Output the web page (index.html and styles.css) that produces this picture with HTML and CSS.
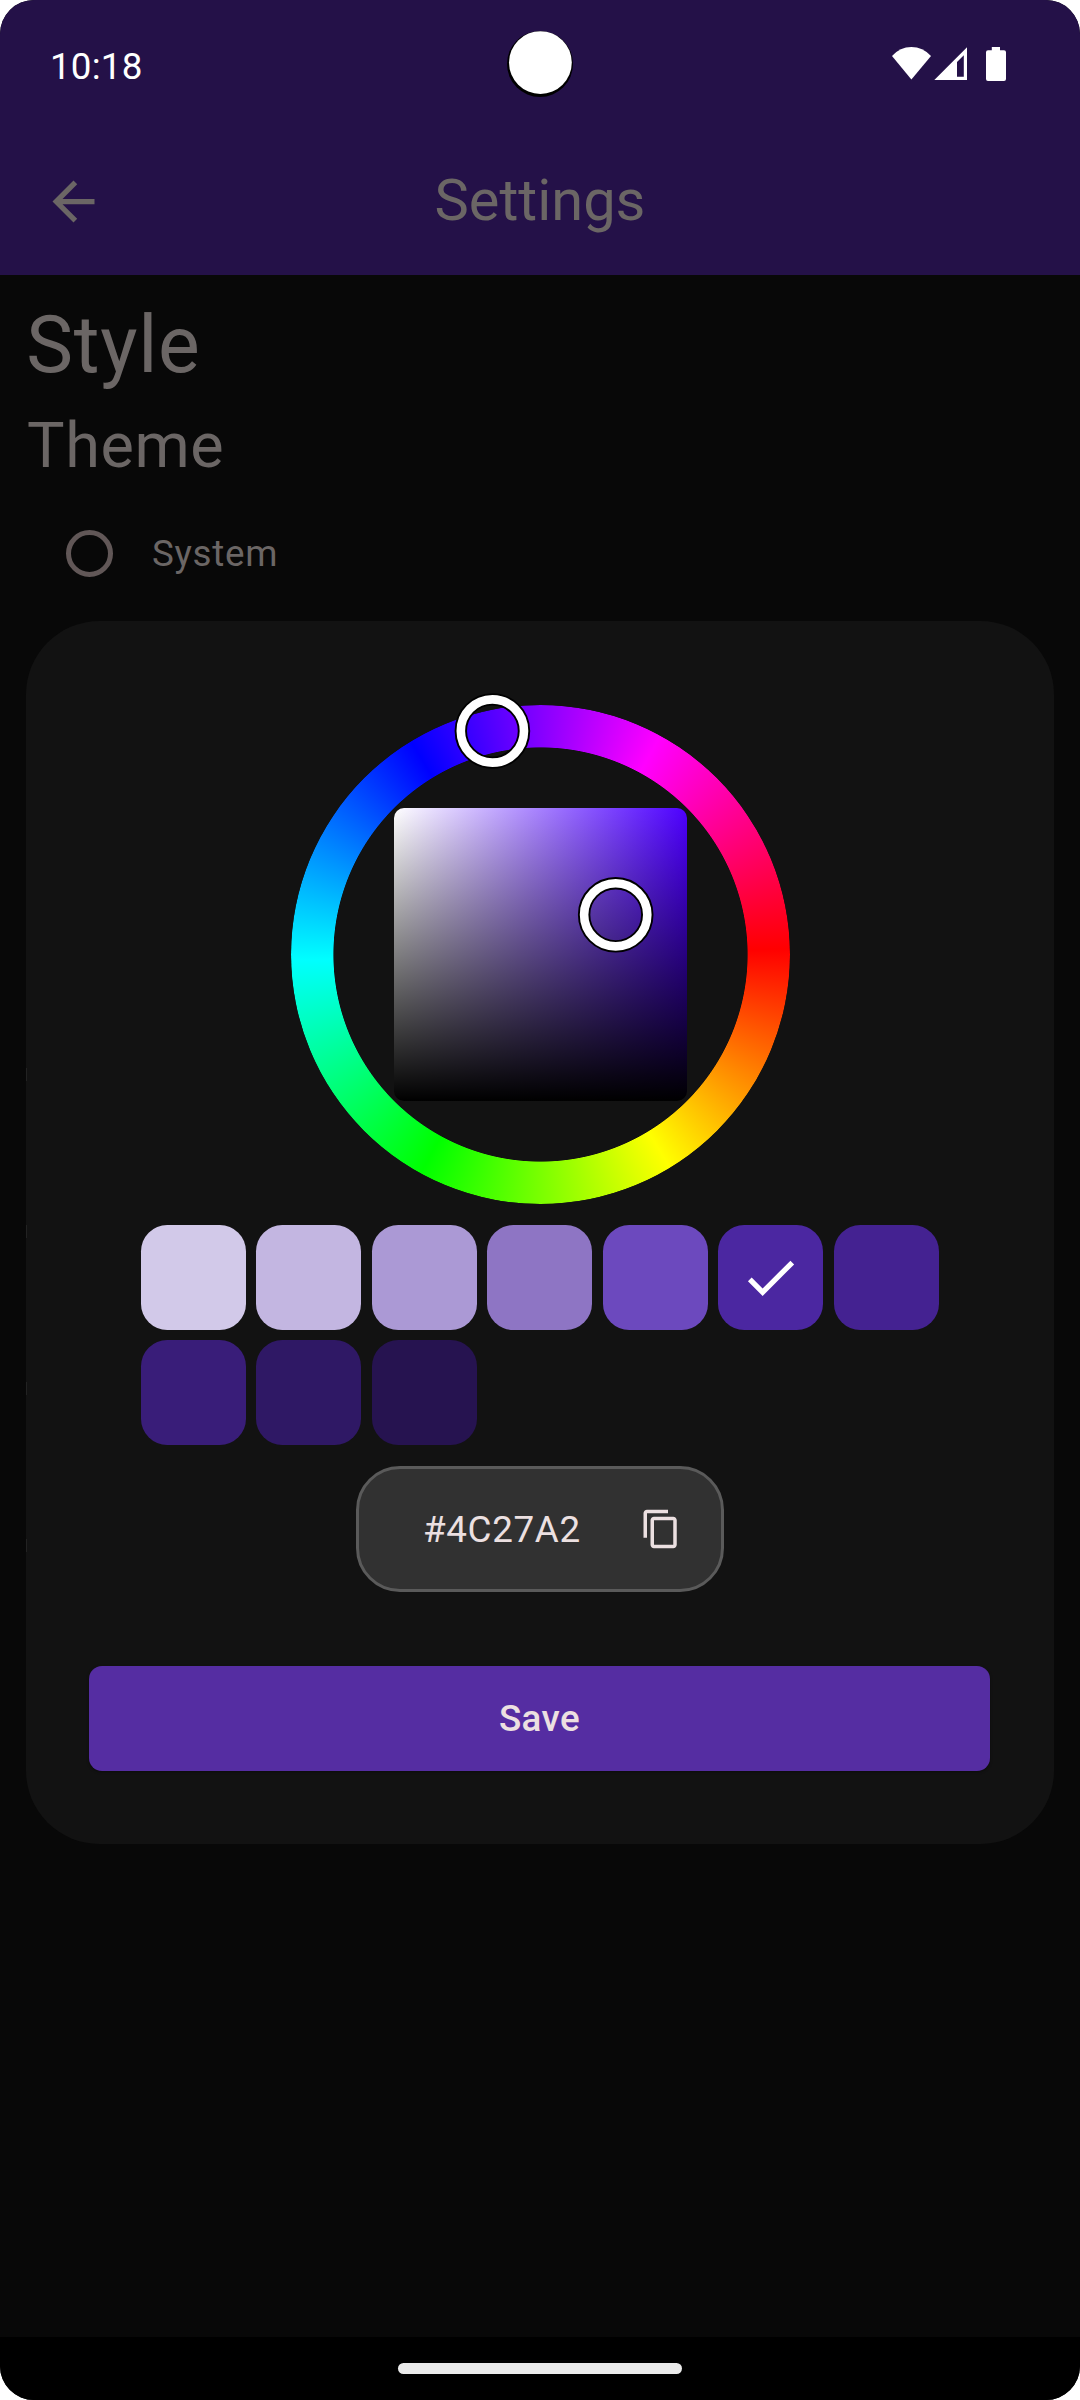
FILE: index.html
```html
<!DOCTYPE html>
<html lang="en">
<head>
<meta charset="utf-8">
<title>Settings</title>
<link rel="stylesheet" href="styles.css">
</head>
<body>
<div class="screen">
  <div class="status-bar">
    <span class="clock">10:18</span>
    <svg class="camera" width="68" height="68" viewBox="0 0 68 68"><circle cx="34" cy="34" r="33" fill="#000"/><circle cx="34.4" cy="32.6" r="31.4" fill="#fff"/></svg>
    <svg class="status-icons" width="116" height="36" viewBox="891 46 116 36" fill="#fff">
      <path d="M892 56Q900 47 911.400 47T931 56L911.400 79.600Z"/>
      <path fill-rule="evenodd" d="M934.300 80L967 47.300V80ZM957 62V76.800H963.800V55.300Z"/>
      <path d="M991.800 47H1000V50.300H1004A2 2 0 0 1 1006 52.300V79A2 2 0 0 1 1004 81H988A2 2 0 0 1 986 79V52.300A2 2 0 0 1 988 50.300H991.800Z"/>
    </svg>
  </div>
  <header class="app-bar">
    <svg class="back" width="63" height="63" viewBox="0 0 24 24"><path fill="currentColor" d="M20 11H7.830l5.590-5.590L12 4l-8 8 8 8 1.410-1.410L7.830 13H20v-2z"/></svg>
    <h1 class="title">Settings</h1>
  </header>
  <main class="content">
    <h2 class="section">Style</h2>
    <h3 class="group">Theme</h3>
    <div class="option"><span class="radio"></span><span>System</span></div>
    <div class="hidden-rows"><i></i><i></i><i></i><i></i></div>
  </main>
  <div class="nav-bar"><span class="handle"></span></div>

  <section class="dialog">
    <div class="wheel">
      <div class="hue-ring"></div>
      <div class="shade"></div>
      <svg class="thumbs" width="499" height="499" viewBox="291 705 499 499" fill="none">
        <g stroke="#000" stroke-width="12.400"><circle cx="492.400" cy="731" r="31.600"/><circle cx="615.700" cy="914.800" r="31.600"/></g>
        <g stroke="#fff" stroke-width="8.600"><circle cx="492.400" cy="731" r="31.600"/><circle cx="615.700" cy="914.800" r="31.600"/></g>
      </svg>
    </div>
    <div class="swatches">
      <span class="swatch s1"></span>
      <span class="swatch s2"></span>
      <span class="swatch s3"></span>
      <span class="swatch s4"></span>
      <span class="swatch s5"></span>
      <span class="swatch s6"><svg width="63" height="63" viewBox="0 0 24 24"><path fill="#fff" d="M9 16.170L4.830 12l-1.420 1.410L9 19 21 7l-1.410-1.410z"/></svg></span>
      <span class="swatch s7"></span>
      <span class="swatch s8"></span>
      <span class="swatch s9"></span>
      <span class="swatch s10"></span>
    </div>
    <div class="code">
      <span>#4C27A2</span>
      <svg width="42" height="42" viewBox="0 0 24 24"><path fill="currentColor" d="M16 1H4c-1.100 0-2 .9-2 2v14h2V3h12V1zm3 4H8c-1.100 0-2 .9-2 2v14c0 1.100.9 2 2 2h11c1.100 0 2-.9 2-2V7c0-1.100-.9-2-2-2zm0 16H8V7h11v14z"/></svg>
    </div>
    <button class="save">Save</button>
  </section>
</div>
</body>
</html>
```
FILE: styles.css
```css
* { box-sizing: border-box; }
body { margin: 0; background: #fff; font-family: Roboto, sans-serif; }
h1, h2, h3 { margin: 0; font-weight: 400; }
svg { display: block; flex: none; }

.screen {
  position: relative;
  display: flex;
  flex-direction: column;
  width: 1080px;
  height: 2400px;
  overflow: hidden;
  border-radius: 34px;
  background: #080808;
  color: #6b6665;
}

.status-bar {
  display: flex;
  justify-content: space-between;
  height: 128px;
  padding: 0 73px 0 50px;
  background: #241148;
  color: #fff;
}
.clock { width: 116px; padding-top: 45px; font-size: 36.75px; line-height: 43px; letter-spacing: .2px; }
.camera { margin: 30px 0 0 23px; }
.status-icons { margin-top: 46px; }

.app-bar {
  display: grid;
  grid-template-columns: 63px 1fr 63px;
  align-items: center;
  height: 147px;
  padding: 0 42px;
  background: #241148;
}
.title { padding-bottom: 4px; font-size: 57.75px; line-height: 68px; text-align: center; }

.content { flex: 1; padding: 18px 26px 0; }
.section { padding-left: .3px; font-size: 78.75px; line-height: 104px; letter-spacing: .7px; }
.group { margin-top: 7px; padding-left: 1px; font-size: 63px; line-height: 84px; letter-spacing: .6px; }
.option {
  display: flex;
  align-items: center;
  gap: 39px;
  height: 126px;
  margin-top: 2px;
  padding-left: 40px;
  font-size: 36.75px;
  letter-spacing: .7px;
}
.radio { width: 47px; height: 47px; border: 5px solid #615757; border-radius: 50%; }
/* these edges meet the dialog's left border */
.hidden-rows { position: relative; z-index: 1; display: grid; gap: 144px; margin-top: 452px; }
.hidden-rows i { width: 1px; height: 13px; background: #222; }

.nav-bar { display: flex; justify-content: center; height: 63px; padding-top: 26px; background: #000; }
.handle { width: 284px; height: 11px; border-radius: 6px; background: #ebebeb; }

.dialog {
  position: absolute;
  top: 621px;
  left: 26px;
  display: flex;
  flex-direction: column;
  align-items: center;
  width: 1028px;
  height: 1223px;
  padding: 84px 63px 73px;
  border-radius: 73.5px;
  background: #121212;
  color: #ece0e1;
}

.wheel { display: grid; place-items: center; width: 499px; height: 499px; flex: none; }
.wheel > * { grid-area: 1 / 1; }
.hue-ring {
  width: 499px;
  height: 499px;
  border-radius: 50%;
  background: conic-gradient(from 88.7deg, #f00, #ff0, #0f0, #0ff, #00f, #f0f, #f00);
  -webkit-mask: radial-gradient(circle, transparent 206.7px, #000 207.5px);
  mask: radial-gradient(circle, transparent 206.7px, #000 207.5px);
}
.shade {
  width: 293px;
  height: 293px;
  border-radius: 10px;
  background: linear-gradient(to bottom, transparent, #000), linear-gradient(to right, #fff, #4d00ff);
}
.thumbs { z-index: 1; overflow: visible; }

.swatches { display: flex; flex-wrap: wrap; gap: 10.5px; width: 798.8px; margin-top: 20.6px; }
.swatch { display: grid; place-items: center; width: 105px; height: 105px; border-radius: 26.25px; }
.s1 { background: #d2c9e9; }
.s2 { background: #c3b6e1; }
.s3 { background: #ab99d5; }
.s4 { background: #8e75c4; }
.s5 { background: #6c49be; }
.s6 { background: #4b27a1; }
.s7 { background: #442291; }
.s8 { background: #391d79; }
.s9 { background: #2f1865; }
.s10 { background: #261350; }

.code {
  display: flex;
  align-items: center;
  justify-content: space-between;
  width: 368px;
  height: 126px;
  margin-top: 20.9px;
  padding: 1px 39.500px 0 64px;
  border: 3px solid #5a5a5a;
  border-radius: 44px;
  background: #313131;
  font-size: 36.75px;
  letter-spacing: .66px;
}

.save {
  width: 901px;
  height: 105px;
  margin: auto 1px 0 0;
  padding: 0;
  border: 0;
  border-radius: 13px;
  background: #552da2;
  box-shadow: 0 1px 3px rgba(0, 0, 0, .4);
  color: #ece0e1;
  font: 500 36.75px Roboto, sans-serif;
  letter-spacing: .4px;
}
```
